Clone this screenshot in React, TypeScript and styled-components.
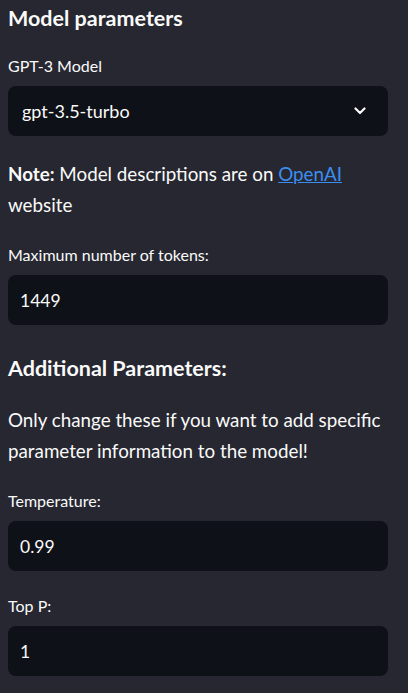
import React from "react";
import styled, { createGlobalStyle } from "styled-components";

const GlobalStyle = createGlobalStyle`
    body {
        margin: 0;
        background: #262730;
        font-family: Lato, "Liberation Sans", sans-serif;
        color: #fafafa;
    }
`;

interface FieldProps {
    label: string;
    value: string;
}

const NumberField = (props: FieldProps) => {
    const { label, value } = props;
    return (
        <Field>
            <Label>{label}</Label>
            <InputBox>{value}</InputBox>
        </Field>
    );
};

const Chevron = () => (
    <svg width="12" height="8" viewBox="0 0 12 8">
        <polyline points="1.5,1.5 6,6 10.5,1.5" fill="none" stroke="#fafafa" strokeWidth="2.2" strokeLinecap="round" strokeLinejoin="round"/>
    </svg>
);

const App = () => {
    return (
        <>
            <GlobalStyle/>
            <Sidebar>
                <Heading>Model parameters</Heading>
                <Field style={{ marginTop: 20 }}>
                    <Label>GPT-3 Model</Label>
                    <SelectBox>
                        <span>gpt-3.5-turbo</span>
                        <Chevron/>
                    </SelectBox>
                </Field>
                <Paragraph gap={22}>
                    <b>Note:</b> Model descriptions are on <Link href="#">OpenAI</Link> website
                </Paragraph>
                <Spacer h={25}/>
                <NumberField label="Maximum number of tokens:" value="1449"/>
                <Heading style={{ marginTop: 25 }}>Additional Parameters:</Heading>
                <Paragraph gap={18}>
                    Only change these if you want to add specific parameter information to the model!
                </Paragraph>
                <Spacer h={25}/>
                <NumberField label="Temperature:" value="0.99"/>
                <Spacer h={25}/>
                <NumberField label="Top P:" value="1"/>
            </Sidebar>
        </>
    );
};

const Sidebar = styled.div`
    display: flex;
    flex-direction: column;
    padding: 0 20px 17px 8px;
    width: 380px;
`;

const Heading = styled.h2`
    margin: 0;
    font-size: 21.5px;
    font-weight: 700;
    line-height: 36px;
`;

const Field = styled.div`
    display: flex;
    flex-direction: column;
    gap: 10px;
`;

const Label = styled.label`
    font-size: 16px;
    line-height: 20px;
`;

const SelectBox = styled.div`
    display: flex;
    align-items: center;
    justify-content: space-between;
    height: 50px;
    padding: 0 22px 0 14px;
    background: #0e1117;
    border-radius: 8px;
    font-size: 18px;
`;

const InputBox = styled.div`
    display: flex;
    align-items: center;
    height: 50px;
    padding: 0 12px;
    background: #0e1117;
    border-radius: 8px;
    font-size: 17.5px;
`;

const Paragraph = styled.p<{ gap: number }>`
    margin: ${p => p.gap}px 0 0;
    font-size: 18.8px;
    line-height: 31px;
    b {
        font-weight: 700;
    }
`;

const Link = styled.a`
    color: #3b8ef0;
    text-decoration: underline;
`;

const Spacer = styled.div<{ h: number }>`
    height: ${p => p.h}px;
    flex-shrink: 0;
`;

export default App;
